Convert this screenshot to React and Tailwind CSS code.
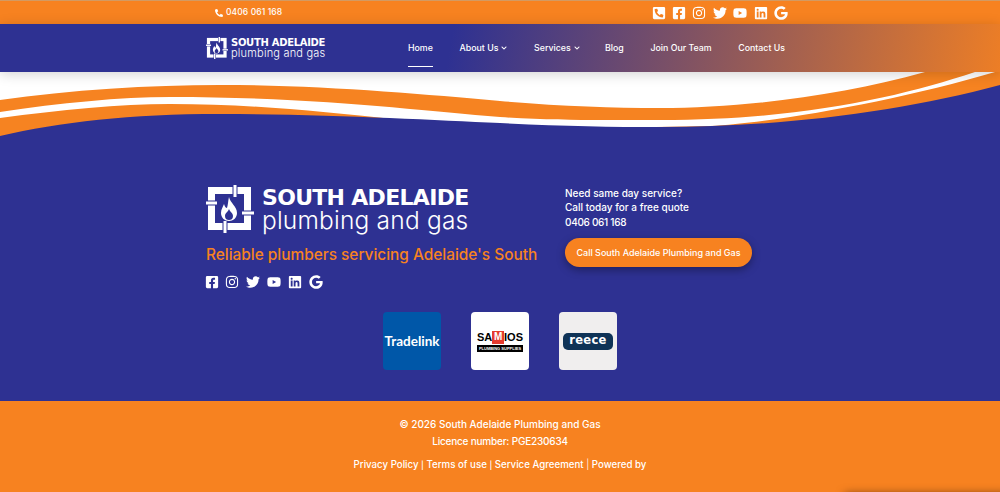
import React from 'react';
import { FaPhoneAlt, FaPhoneSquareAlt, FaFacebookSquare, FaInstagram, FaTwitter, FaYoutube, FaLinkedin, FaGoogle, FaChevronDown } from 'react-icons/fa';

function LogoMark({ className }) {
  return (
    <svg viewBox="0 0 48 48" className={className}>
      <rect x="5.5" y="5.5" width="36" height="36" fill="none" stroke="#fff" strokeWidth="7" />
      <rect x="26.5" y="0" width="5" height="12" fill="#2e3192" />
      <rect x="27.5" y="0" width="3" height="12" fill="#fff" />
      <rect x="0" y="15.5" width="11" height="5" fill="#2e3192" />
      <rect x="0" y="16.5" width="11" height="3" fill="#fff" />
      <rect x="36" y="25.5" width="12" height="5" fill="#2e3192" />
      <rect x="36" y="26.5" width="12" height="3" fill="#fff" />
      <rect x="16.5" y="36" width="5" height="12" fill="#2e3192" />
      <rect x="17.5" y="36" width="3" height="12" fill="#fff" />
      <path d="M23 12C24 18 31 21 31 28C31 33 27 36 23 36C19 36 15 33 15 28C15 24 17 22 18 19C19 22 20 23 21 23C22 20 22 16 23 12Z" fill="#fff" />
      <path d="M23 24C24 27 27 28 27 31C27 34 25 35 23 35C21 35 19 34 19 31C19 28 22 27 23 24Z" fill="#2e3192" />
    </svg>
  );
}

function Wave() {
  return (
    <svg viewBox="0 72 1000 68" className="block w-full h-[68px]" preserveAspectRatio="none">
      <rect x="0" y="72" width="1000" height="68" fill="#fff" />
      <path d="M0 100C70 90 150 85 220 85C320 85 420 94 500 101C560 106 610 108 660 108C740 108 840 96 925 72L975 72C900 97 800 120 660 120C600 120 560 121 500 117C420 111 320 97 170 97C120 97 60 103 0 112Z" fill="#f68321" />
      <path d="M0 118C60 110 120 104 170 104C250 104 320 111 400 120L500 130L710 126C780 122 900 100 995 72L1000 72L1000 140L0 140Z" fill="#f68321" />
      <path d="M0 136C60 122 130 114 220 114C330 114 430 120 500 123C560 126 610 127 660 127C780 127 900 112 1000 85L1000 140L0 140Z" fill="#2e3192" />
    </svg>
  );
}

function Partners() {
  return (
    <div className="flex justify-center gap-[30px] mt-[23px]">
      <div className="w-[58px] h-[58px] rounded-sm bg-[#0057a8] flex items-center justify-center">
        <span className="text-white text-[13.5px] font-bold font-['Lato',sans-serif]">Tradelink</span>
      </div>
      <div className="w-[58px] h-[58px] rounded-sm bg-white flex flex-col items-center justify-center">
        <div className="flex items-center justify-center w-[46px] h-[13px] text-black text-[11px] font-bold leading-none font-['Liberation_Sans',sans-serif]">
          <span>SA</span>
          <span className="bg-[#e53b2f] text-white w-[13px] h-[13px] flex items-center justify-center text-[10px]">M</span>
          <span>IOS</span>
        </div>
        <div className="bg-black text-white text-[4px] font-bold leading-[7px] h-[7px] mt-[1px] w-[46px] text-center whitespace-nowrap overflow-hidden font-['Liberation_Sans',sans-serif]">PLUMBING SUPPLIES</div>
      </div>
      <div className="w-[58px] h-[58px] rounded-sm bg-[#f0eeee] flex items-center justify-center">
        <div className="w-[50px] h-[17px] rounded-[5px] bg-[#0f3357] flex items-center justify-center">
          <span className="text-white text-[11.5px] font-bold leading-none tracking-[0.3px] font-['DejaVu_Sans',sans-serif]">reece</span>
        </div>
      </div>
    </div>
  );
}

export default function App() {
  const font = "font-['Inter','Noto_Sans',sans-serif]";
  return (
    <div className={`relative h-[492px] overflow-hidden bg-[#2e3192] text-white ${font}`}>
      <div className="h-[24px] border-t border-[#d39a62] bg-[#f78220]">
        <div className="w-[588px] mx-auto pl-[9px] flex items-center justify-between h-[23px]">
          <div className="flex items-center gap-[3px] text-[8.5px] font-medium tracking-[0.1px]">
            <FaPhoneAlt className="text-[8px]" />
            <span>0406 061 168</span>
          </div>
          <div className="flex items-center gap-[6.4px] text-[14px] pr-[6px]">
            <FaPhoneSquareAlt />
            <FaFacebookSquare />
            <FaInstagram />
            <FaTwitter />
            <FaYoutube />
            <FaLinkedin />
            <FaGoogle />
          </div>
        </div>
      </div>

      <header className="relative z-10 h-[48px] bg-[linear-gradient(100deg,#2e3192_45%,#f78220_103%)] shadow-[0_2px_12px_rgba(0,0,0,0.18)]">
        <div className="w-[588px] mx-auto h-full flex items-center">
          <div className="flex items-center gap-[3px] w-[202px] shrink-0">
            <LogoMark className="w-[22px] h-[22px]" />
            <div className="leading-none">
              <div className="text-[10px] font-bold font-['DejaVu_Sans',sans-serif] h-[8px] leading-[8px] whitespace-nowrap tracking-[-0.3px]">SOUTH ADELAIDE</div>
              <div className="text-[11px] font-light h-[11px] leading-[12px] whitespace-nowrap tracking-[0.2px]">plumbing and gas</div>
            </div>
          </div>
          <nav className="flex items-center h-full gap-[26.7px] text-[8.8px] font-medium whitespace-nowrap">
            <a className="relative h-full flex items-center">
              Home
              <span className="absolute left-0 right-0 bottom-[5px] h-[1px] bg-white"></span>
            </a>
            <a className="flex items-center gap-[3px]">About Us <FaChevronDown className="text-[6px]" /></a>
            <a className="flex items-center gap-[3px] -mr-[1.5px]">Services <FaChevronDown className="text-[6px]" /></a>
            <a>Blog</a>
            <a>Join Our Team</a>
            <a>Contact Us</a>
          </nav>
        </div>
      </header>

      <Wave />

      <main className="h-[261px] pt-[45px]">
        <div className="w-[588px] mx-auto flex">
          <div className="w-[359px]">
            <div className="flex items-center gap-[8px] h-[48px]">
              <LogoMark className="w-[48px] h-[48px]" />
              <div className="leading-none pt-[2px]">
                <div className="text-[22px] font-bold font-['DejaVu_Sans',sans-serif] h-[20px] leading-[20px] whitespace-nowrap tracking-[-0.7px]">SOUTH ADELAIDE</div>
                <div className="text-[24.5px] font-light h-[24px] leading-[24px] whitespace-nowrap tracking-[0.2px]">plumbing and gas</div>
              </div>
            </div>
            <div className="mt-[11px] text-[15.4px] font-medium text-[#f78220] whitespace-nowrap leading-[22px]">Reliable plumbers servicing Adelaide's South</div>
            <div className="flex items-center gap-[6.9px] mt-[9px] -ml-[1.5px] text-[14px]">
              <FaFacebookSquare />
              <FaInstagram />
              <FaTwitter />
              <FaYoutube />
              <FaLinkedin />
              <FaGoogle />
            </div>
          </div>
          <div className="pt-[1px]">
            <p className="text-[10px] font-medium leading-[14.3px]">
              Need same day service?<br />
              Call today for a free quote<br />
              <span className="tracking-[-0.3px]">0406 061 168</span>
            </p>
            <button className="mt-[9px] w-[187px] h-[29px] rounded-full bg-[#f78220] text-[9px] font-medium shadow-[0_3px_8px_rgba(0,0,0,0.35)]">Call South Adelaide Plumbing and Gas</button>
          </div>
        </div>
        <Partners />
      </main>

      <footer className="h-[91px] bg-[#f78220] pt-[16px] text-center font-medium">
        <p className="text-[10px] leading-[14px]">© 2026 South Adelaide Plumbing and Gas</p>
        <p className="text-[10px] leading-[14px] mt-[3px] tracking-[-0.2px]">Licence number: PGE230634</p>
        <p className="text-[9.7px] leading-[14px] mt-[10px]">Privacy Policy <span className="text-[8px]">|</span> Terms of use <span className="text-[8px]">|</span> Service Agreement <span className="font-light">|</span> Powered by</p>
      </footer>

      <div className="absolute left-[845px] top-[494px] w-[200px] h-[30px] shadow-[0_0_10px_rgba(0,0,0,0.55)]"></div>
    </div>
  );
}
